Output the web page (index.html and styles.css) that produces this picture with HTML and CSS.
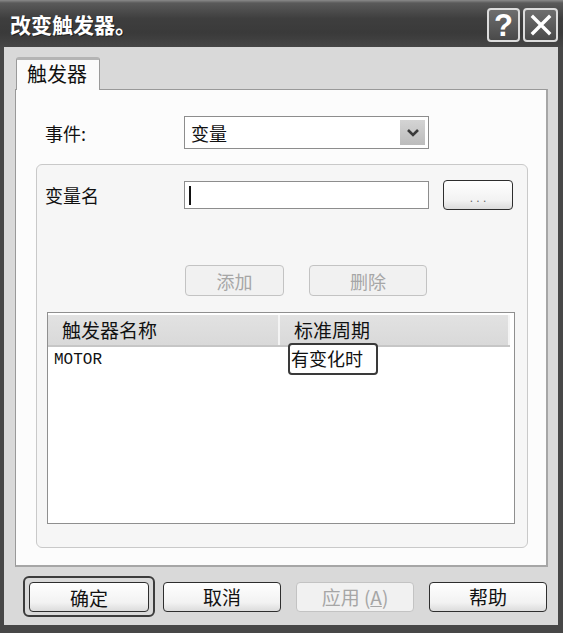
FILE: index.html
```html
<!DOCTYPE html>
<html lang="zh-CN">
<head>
<meta charset="utf-8">
<title>改变触发器</title>
<link rel="stylesheet" href="styles.css">
</head>
<body>
<div class="window">
  <div class="titlebar">
    <div class="title">改变触发器。</div>
    <div class="caption-btn help">?</div>
    <div class="caption-btn close">
      <svg width="24" height="24" viewBox="0 0 24 24"><path d="M4 4 L20 20 M20 4 L4 20" stroke="#fff" stroke-width="3.4" stroke-linecap="square" fill="none"/></svg>
    </div>
  </div>
  <div class="client">
    <div class="tabs"><div class="tab">触发器</div></div>
    <div class="panel">
      <div class="row event-row">
        <span class="label">事件:</span>
        <div class="combo">
          <span class="combo-text">变量</span>
          <span class="combo-btn">
            <svg width="14" height="10" viewBox="0 0 14 10"><path d="M2 2 L7 7 L12 2" stroke="#3a3a3a" stroke-width="2.6" fill="none"/></svg>
          </span>
        </div>
      </div>
      <div class="group">
        <div class="row var-row">
          <span class="label">变量名</span>
          <div class="textbox"><span class="caret"></span></div>
          <div class="btn dots">. . .</div>
        </div>
        <div class="row action-row">
          <div class="btn disabled add">添加</div>
          <div class="btn disabled del">删除</div>
        </div>
        <div class="list">
          <div class="list-head">
            <div class="col c1">触发器名称</div>
            <div class="col c2">标准周期</div>
          </div>
          <div class="list-row">
            <div class="cell c1 mono">MOTOR</div>
            <div class="cell c2"><span class="editor">有变化时</span></div>
          </div>
        </div>
      </div>
    </div>
    <div class="footer">
      <div class="focus-ring"><div class="btn foot">确定</div></div>
      <div class="btn foot cancel">取消</div>
      <div class="btn foot disabled">应用&nbsp;(<u>A</u>)</div>
      <div class="btn foot">帮助</div>
    </div>
  </div>
</div>
</body>
</html>
```

FILE: styles.css
```css
* { box-sizing: border-box; }
html, body { margin: 0; padding: 0; background: #fff; }
body { font-family: "Noto Sans CJK SC", "Noto Sans", sans-serif; color: #111; }

.window {
  width: 563px;
  height: 633px;
  background: #474747;
  display: flex;
  flex-direction: column;
}

.titlebar {
  height: 47px;
  flex: none;
  display: flex;
  align-items: center;
  padding: 0 6px 0 10px;
  background: linear-gradient(#8a8a8a 0, #5a5a5a 3px, #3e3e3e 40%, #3a3a3a 70%, #464646 100%);
}
.title {
  flex: 1;
  color: #fff;
  font-size: 21px;
  font-weight: 700;
  text-shadow: 1px 1px 0 #222;
  padding-top: 1px;
}
.caption-btn {
  width: 33px;
  height: 34px;
  border: 2px solid #dcdcdc;
  border-radius: 4px;
  background: linear-gradient(#6e6e6e, #4a4a4a);
  color: #fff;
  display: flex;
  align-items: center;
  justify-content: center;
  margin-top: 3px;
}
.caption-btn.help {
  font-family: "Liberation Sans", Arial, sans-serif;
  font-size: 31px;
  font-weight: 700;
  line-height: 1;
}
.caption-btn.close { width: 35px; margin-left: 3px; margin-right: -1px; }

.client {
  flex: 1;
  margin: 0 5px 8px 4px;
  background: #d9d9d9;
  padding: 10px 10px 0 11px;
  display: flex;
  flex-direction: column;
}

.tabs { height: 32px; display: flex; position: relative; z-index: 1; }
.tab {
  width: 84px;
  height: 33px;
  margin-left: 1px;
  background: #fbfbfb;
  border: 1px solid #9a9a9a;
  border-top: 3px solid #b4b4b4;
  border-bottom: none;
  border-radius: 3px 3px 0 0;
  font-size: 20px;
  line-height: 24px;
  padding: 2px 0 0 10px;
  color: #111;
}

.panel {
  width: 533px;
  height: 478px;
  background: #fcfcfc;
  border: 1px solid #999;
  border-right: 2px solid #a6a6a6;
  border-bottom: 2px solid #a6a6a6;
}

.row { display: flex; align-items: center; }
.label { font-size: 18px; color: #111; }

.event-row { margin-top: 26px; padding-left: 29px; }
.event-row .label { width: 139px; }
.combo {
  width: 245px;
  height: 33px;
  border: 1px solid #8d8d8d;
  background: #fff;
  display: flex;
  align-items: center;
  padding: 0 1px 0 6px;
}
.combo-text { flex: 1; font-size: 18px; }
.combo-btn {
  width: 25px;
  height: 25px;
  background: linear-gradient(#d4d4d4, #bcbcbc);
  display: flex;
  align-items: center;
  justify-content: center;
  margin-right: 2px;
}

.group {
  margin: 15px 0 0 20px;
  width: 492px;
  height: 384px;
  border: 1px solid #c9c9c9;
  border-radius: 6px;
  background: #f6f6f6;
  padding: 15px 0 0 8px;
}
.var-row .label { width: 139px; }
.textbox {
  width: 245px;
  height: 28px;
  border: 1px solid #8d8d8d;
  background: #fff;
  padding: 4px 0 0 4px;
}
.caret { display: block; width: 2px; height: 19px; background: #111; }

.btn {
  display: flex;
  align-items: center;
  justify-content: center;
  background: linear-gradient(#ffffff, #f2f2f2 70%, #dcdcdc);
  border: 1px solid #2e2e2e;
  border-radius: 4px;
  font-size: 18px;
  color: #111;
}
.btn.dots {
  width: 70px;
  height: 30px;
  margin-left: 14px;
  font-family: "Liberation Sans", sans-serif;
  font-size: 12px;
  color: #666;
  padding-top: 5px;
}
.btn.disabled {
  border-color: #c3c3c3;
  color: #a6a6a6;
  background: #f1f1f1;
}
.action-row { margin-top: 55px; padding-left: 140px; gap: 25px; }
.btn.add { width: 99px; height: 31px; }
.btn.del { width: 118px; height: 31px; }

.list {
  margin: 16px 0 0 2px;
  width: 468px;
  height: 212px;
  border: 1px solid #8f8f8f;
  background: #fff;
  padding-top: 2px;
}
.list-head {
  display: flex;
  height: 32px;
  background: linear-gradient(#e2e2e2, #d9d9d9);
  border-bottom: 2px solid #c6c6c6;
  margin-right: 4px;
}
.col { font-size: 19px; line-height: 30px; }
.list-head .c1 { width: 232px; padding-left: 14px; border-right: 2px solid #f4f4f4; }
.list-head .c2 { flex: 1; padding-left: 14px; border-right: 2px solid #f4f4f4; }
.list-row { display: flex; height: 28px; align-items: flex-start; }
.cell.c1 { width: 233px; padding: 4px 0 0 6px; }
.mono { font-family: "Liberation Mono", "DejaVu Sans Mono", monospace; font-size: 16px; color: #111; }
.editor {
  display: inline-block;
  margin: -5px 0 0 7px;
  width: 90px;
  height: 32px;
  border: 2px solid #3a3a3a;
  border-radius: 4px;
  background: #fff;
  font-size: 18px;
  line-height: 26px;
  padding-left: 1px;
  color: #111;
}

.footer {
  display: flex;
  align-items: center;
  margin-top: 9px;
  padding-left: 8px;
}
.btn.foot { width: 118px; height: 30px; font-size: 19px; }
.footer > .btn.foot { margin-left: 15px; }
.footer > .btn.foot.cancel { margin-left: 8px; }
.focus-ring {
  padding: 4px 4px 3px 4px;
  border: 2px solid #3c3c3c;
  border-radius: 6px;
}
.focus-ring .btn.foot { width: 120px; }
.btn u { text-decoration: underline; }
```
